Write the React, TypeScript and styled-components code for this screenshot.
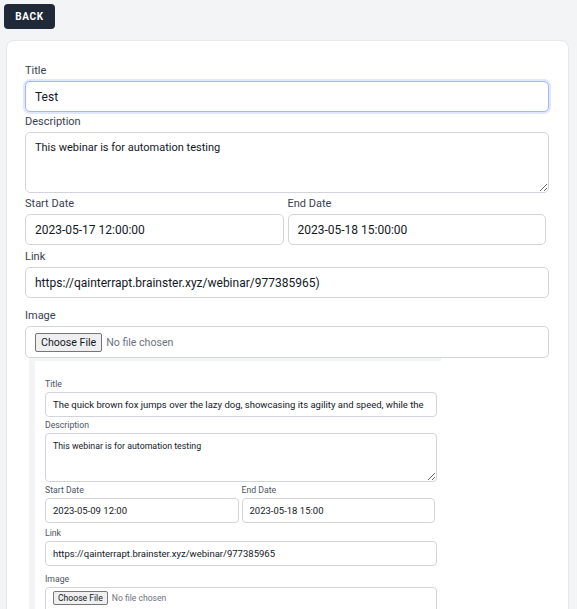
import React from "react";
import styled, { createGlobalStyle, css } from "styled-components";

const GlobalStyle = createGlobalStyle`
  html, body {
    margin: 0;
    padding: 0;
    background: #f3f4f6;
    font-family: Roboto, "Liberation Sans", Arial, sans-serif;
  }
  * { box-sizing: border-box; }
`;

interface SizeProps {
  $compact?: boolean;
}

const Page = styled.div`
  padding: 4px 4px 0 4px;
  height: 609px;
  overflow: hidden;
`;

const BackButton = styled.button`
  display: block;
  width: 51px;
  height: 25px;
  border: none;
  border-radius: 4px;
  background: #1f2937;
  color: #ffffff;
  font-family: Roboto, Arial, sans-serif;
  font-size: 10px;
  font-weight: 700;
  letter-spacing: 0.7px;
  cursor: pointer;
`;

const Card = styled.div`
  margin: 11px 4px 0 2px;
  background: #ffffff;
  border: 1px solid #e5e7eb;
  border-radius: 8px;
  padding: 21px 19px 40px 18px;
`;

const Field = styled.div<{ $gap?: number }>`
  margin-bottom: ${(p) => p.$gap ?? 1}px;
`;

const Label = styled.label<SizeProps>`
  display: block;
  color: ${(p) => (p.$compact ? "#4b5563" : "#374151")};
  font-size: ${(p) => (p.$compact ? 8.7 : 11)}px;
  line-height: ${(p) => (p.$compact ? 12 : 17)}px;
  margin-bottom: 2px;
`;

const fieldBase = css<SizeProps>`
  display: block;
  width: 100%;
  background: #ffffff;
  border: 1px solid #d1d5db;
  border-radius: ${(p) => (p.$compact ? 4 : 5)}px;
  color: #111827;
  font-family: Roboto, Arial, sans-serif;
  font-size: ${(p) => (p.$compact ? 9.5 : 12)}px;
  padding: 0 ${(p) => (p.$compact ? 7 : 9)}px;
  outline: none;
`;

const TextInput = styled.input<SizeProps & { $focused?: boolean }>`
  ${fieldBase};
  height: ${(p) => (p.$compact ? 25 : 31)}px;
  ${(p) =>
    p.$focused &&
    css`
      border-color: #a5b4fc;
      box-shadow: 0 0 0 2px #e0e7ff;
    `}
`;

const TextArea = styled.textarea<SizeProps>`
  ${fieldBase};
  height: ${(p) => (p.$compact ? 49 : 61)}px;
  font-size: ${(p) => (p.$compact ? 8.8 : 11)}px;
  padding-top: ${(p) => (p.$compact ? 6 : 7)}px;
  resize: vertical;
  line-height: 1.4;
`;

const DateRow = styled.div<SizeProps>`
  display: grid;
  grid-template-columns: 1fr 1fr;
  column-gap: ${(p) => (p.$compact ? 3 : 4)}px;
  padding-right: ${(p) => (p.$compact ? 2 : 3)}px;
`;

const FileInput = styled.input<SizeProps>`
  ${fieldBase};
  height: ${(p) => (p.$compact ? 26 : 32)}px;
  color: #6b7280;
  font-size: ${(p) => (p.$compact ? 8.6 : 10.6)}px;
  padding: ${(p) => (p.$compact ? "3px 7px" : "6px 9px")};

  &::file-selector-button {
    font-family: Roboto, Arial, sans-serif;
    font-size: ${(p) => (p.$compact ? 8.6 : 10.6)}px;
    color: #111827;
    background: #efefef;
    border: 1px solid #767676;
    border-radius: 2px;
    padding: ${(p) => (p.$compact ? "1px 4px" : "2px 5px")};
    margin-right: 4px;
  }
`;

const Preview = styled.div`
  margin-left: 4px;
  width: 412px;
  background: #f3f4f6;
  padding: 3px 0 0 6px;
`;

const PreviewCard = styled.div`
  background: #ffffff;
  padding: 17px 4px 40px 10px;
`;

interface FormData {
  title: string;
  description: string;
  start: string;
  end: string;
  link: string;
}

function FormFields({
  data,
  compact,
  children,
}: {
  data: FormData;
  compact?: boolean;
  children?: React.ReactNode;
}) {
  return (
    <>
      <Field $gap={compact ? 2 : 1}>
        <Label $compact={compact}>Title</Label>
        <TextInput $compact={compact} $focused={!compact} defaultValue={data.title} />
      </Field>
      <Field $gap={compact ? 2 : 2}>
        <Label $compact={compact}>Description</Label>
        <TextArea $compact={compact} defaultValue={data.description} />
      </Field>
      <DateRow $compact={compact}>
        <Field $gap={compact ? 4 : 3}>
          <Label $compact={compact}>Start Date</Label>
          <TextInput $compact={compact} defaultValue={data.start} />
        </Field>
        <Field $gap={compact ? 4 : 3}>
          <Label $compact={compact}>End Date</Label>
          <TextInput $compact={compact} defaultValue={data.end} />
        </Field>
      </DateRow>
      <Field $gap={compact ? 7 : 9}>
        <Label $compact={compact}>Link</Label>
        <TextInput $compact={compact} defaultValue={data.link} />
      </Field>
      <Field $gap={0}>
        <Label $compact={compact}>Image</Label>
        <FileInput $compact={compact} type="file" />
        {children}
      </Field>
    </>
  );
}

const mainData: FormData = {
  title: "Test",
  description: "This webinar is for automation testing",
  start: "2023-05-17 12:00:00",
  end: "2023-05-18 15:00:00",
  link: "https://qainterrapt.brainster.xyz/webinar/977385965)",
};

const previewData: FormData = {
  title:
    "The quick brown fox jumps over the lazy dog, showcasing its agility and speed, while the",
  description: "This webinar is for automation testing",
  start: "2023-05-09 12:00",
  end: "2023-05-18 15:00",
  link: "https://qainterrapt.brainster.xyz/webinar/977385965",
};

export default function App() {
  return (
    <>
      <GlobalStyle />
      <Page>
        <BackButton>BACK</BackButton>
        <Card>
          <FormFields data={mainData}>
            <Preview>
              <PreviewCard>
                <FormFields data={previewData} compact />
              </PreviewCard>
            </Preview>
          </FormFields>
        </Card>
      </Page>
    </>
  );
}
